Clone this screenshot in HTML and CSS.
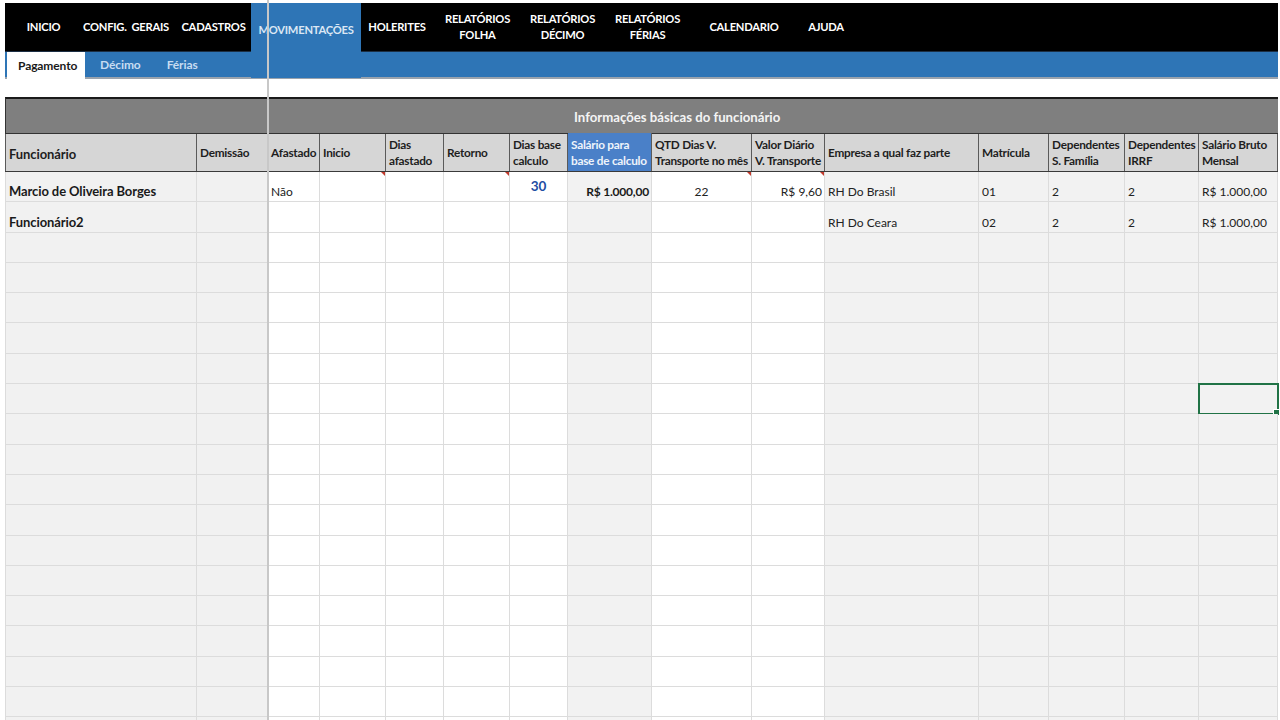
FILE: index.html
```html
<!DOCTYPE html>
<html lang="pt-BR">
<head>
<meta charset="utf-8">
<title>Movimentações - Pagamento</title>
<link rel="stylesheet" href="styles.css">
</head>
<body>
<div class="page">
  <nav class="topnav">
    <div class="nav-item w-inicio">INICIO</div>
    <div class="nav-item w-config">CONFIG.&nbsp; GERAIS</div>
    <div class="nav-item w-cad">CADASTROS</div>
    <div class="nav-item w-mov active">MOVIMENTAÇÕES</div>
    <div class="nav-item w-hol">HOLERITES</div>
    <div class="nav-item w-rf">RELATÓRIOS<br>FOLHA</div>
    <div class="nav-item w-rd">RELATÓRIOS<br>DÉCIMO</div>
    <div class="nav-item w-rfe">RELATÓRIOS<br>FÉRIAS</div>
    <div class="nav-item w-cal">CALENDARIO</div>
    <div class="nav-item w-aj">AJUDA</div>
  </nav>
  <div class="subnav">
    <div class="sub-item current">Pagamento</div>
    <div class="sub-item">Décimo</div>
    <div class="sub-item">Férias</div>
  </div>
  <div class="spacer"></div>

  <div class="sheet">
    <div class="band">Informações básicas do funcionário</div>
    <div class="head">
      <div class="hc mark big">Funcionário</div>
      <div class="hc mark">Demissão</div>
      <div class="hc">Afastado</div>
      <div class="hc mark">Inicio</div>
      <div class="hc two">Dias<br>afastado</div>
      <div class="hc mark">Retorno</div>
      <div class="hc two">Dias base<br>calculo</div>
      <div class="hc two hl">Salário para<br>base de calculo</div>
      <div class="hc two mark">QTD Dias V.<br>Transporte no mês</div>
      <div class="hc two mark">Valor Diário<br>V. Transporte</div>
      <div class="hc mark">Empresa a qual faz parte</div>
      <div class="hc mark">Matrícula</div>
      <div class="hc two mark">Dependentes<br>S. Família</div>
      <div class="hc two mark">Dependentes<br>IRRF</div>
      <div class="hc two mark">Salário Bruto<br>Mensal</div>
    </div>

    <div class="row">
      <div class="b">Marcio de Oliveira Borges</div><div></div><div>Não</div><div></div><div></div><div></div>
      <div class="days">30</div><div class="b2 r">R$ 1.000,00</div><div class="c">22</div><div class="r">R$ 9,60</div>
      <div>RH Do Brasil</div><div>01</div><div>2</div><div>2</div><div>R$ 1.000,00</div>
    </div>
    <div class="row">
      <div class="b">Funcionário2</div><div></div><div></div><div></div><div></div><div></div>
      <div></div><div></div><div></div><div></div>
      <div>RH Do Ceara</div><div>02</div><div>2</div><div>2</div><div>R$ 1.000,00</div>
    </div>
    <div class="row e"><div></div><div></div><div></div><div></div><div></div><div></div><div></div><div></div><div></div><div></div><div></div><div></div><div></div><div></div><div></div></div>
    <div class="row e"><div></div><div></div><div></div><div></div><div></div><div></div><div></div><div></div><div></div><div></div><div></div><div></div><div></div><div></div><div></div></div>
    <div class="row e"><div></div><div></div><div></div><div></div><div></div><div></div><div></div><div></div><div></div><div></div><div></div><div></div><div></div><div></div><div></div></div>
    <div class="row e"><div></div><div></div><div></div><div></div><div></div><div></div><div></div><div></div><div></div><div></div><div></div><div></div><div></div><div></div><div></div></div>
    <div class="row e"><div></div><div></div><div></div><div></div><div></div><div></div><div></div><div></div><div></div><div></div><div></div><div></div><div></div><div></div><div></div></div>
    <div class="row e"><div></div><div></div><div></div><div></div><div></div><div></div><div></div><div></div><div></div><div></div><div></div><div></div><div></div><div></div><div class="sel"></div></div>
    <div class="row e"><div></div><div></div><div></div><div></div><div></div><div></div><div></div><div></div><div></div><div></div><div></div><div></div><div></div><div></div><div></div></div>
    <div class="row e"><div></div><div></div><div></div><div></div><div></div><div></div><div></div><div></div><div></div><div></div><div></div><div></div><div></div><div></div><div></div></div>
    <div class="row e"><div></div><div></div><div></div><div></div><div></div><div></div><div></div><div></div><div></div><div></div><div></div><div></div><div></div><div></div><div></div></div>
    <div class="row e"><div></div><div></div><div></div><div></div><div></div><div></div><div></div><div></div><div></div><div></div><div></div><div></div><div></div><div></div><div></div></div>
    <div class="row e"><div></div><div></div><div></div><div></div><div></div><div></div><div></div><div></div><div></div><div></div><div></div><div></div><div></div><div></div><div></div></div>
    <div class="row e"><div></div><div></div><div></div><div></div><div></div><div></div><div></div><div></div><div></div><div></div><div></div><div></div><div></div><div></div><div></div></div>
    <div class="row e"><div></div><div></div><div></div><div></div><div></div><div></div><div></div><div></div><div></div><div></div><div></div><div></div><div></div><div></div><div></div></div>
    <div class="row e"><div></div><div></div><div></div><div></div><div></div><div></div><div></div><div></div><div></div><div></div><div></div><div></div><div></div><div></div><div></div></div>
    <div class="row e"><div></div><div></div><div></div><div></div><div></div><div></div><div></div><div></div><div></div><div></div><div></div><div></div><div></div><div></div><div></div></div>
    <div class="row e"><div></div><div></div><div></div><div></div><div></div><div></div><div></div><div></div><div></div><div></div><div></div><div></div><div></div><div></div><div></div></div>
    <div class="row e"><div></div><div></div><div></div><div></div><div></div><div></div><div></div><div></div><div></div><div></div><div></div><div></div><div></div><div></div><div></div></div>
  </div>
  <div class="freeze"></div>
</div>
</body>
</html>
```
FILE: styles.css
```css
* { box-sizing: border-box; }
html, body {
  margin: 0;
  padding: 0;
  background: #ffffff;
  height: 720px;
  overflow: hidden;
}
body {
  font-family: "Lato", "Liberation Sans", sans-serif;
  color: #1a1a1a;
}
.page {
  position: relative;
  padding: 3px 2px 0 5px;
  height: 720px;
  overflow: hidden;
}

/* top navigation */
.topnav {
  display: flex;
  background: #000;
  height: 49px;
  width: 1273px;
  border-bottom: 1px solid #1c2f44;
}
.nav-item {
  display: flex;
  align-items: center;
  justify-content: center;
  text-align: center;
  color: #ffffff;
  font-weight: 700;
  font-size: 11.2px;
  line-height: 16px;
  letter-spacing: -0.25px;
  white-space: nowrap;
}
.w-inicio { width: 77px; }
.w-config { width: 88px; }
.w-cad { width: 81px; padding-left: 6px; }
.w-mov { width: 110px; }
.w-hol { width: 72px; }
.w-rf { width: 89px; }
.w-rd { width: 81px; }
.w-rfe { width: 89px; }
.w-cal { width: 104px; }
.w-aj { width: 60px; }
.nav-item.active {
  background: #2e75b6;
  color: #dbe7f4;
  height: 75px;
  align-items: flex-start;
  padding-top: 19px;
  position: relative;
  z-index: 1;
}

.subnav {
  display: flex;
  align-items: stretch;
  background: #2e75b6;
  height: 27px;
  width: 1273px;
  border-bottom: 2px solid #9aa3ad;
}
.sub-item {
  display: flex;
  align-items: center;
  font-size: 12px;
  font-weight: 700;
  color: #c7dcf1;
  padding: 0 13px;
  letter-spacing: -0.1px;
}
.sub-item.current {
  background: #ffffff;
  color: #1a1a1a;
  margin-left: 2px;
  padding: 0 10px 0 11px;
  width: 78px;
  margin-bottom: -2px;
}
.sub-item:nth-child(2) { padding-left: 15px; }
.sub-item:nth-child(3) { padding-left: 13px; }

.spacer { height: 18px; }

/* sheet */
.sheet {
  width: 1273px;
}
.band {
  height: 37px;
  background: #7f7f7f;
  border-top: 2px solid #1a1a1a;
  border-left: 1px solid #333;
  border-bottom: 1px solid #333;
  color: #f4f4f4;
  font-weight: 700;
  font-size: 13.2px;
  display: flex;
  align-items: center;
  padding-left: 568px;
  padding-top: 2px;
}
.head, .row {
  display: grid;
  grid-template-columns: 192px 71px 52px 66px 58px 66px 58px 84px 100px 73px 154px 70px 76px 74px 79px;
}
.head {
  height: 38px;
  background: #d6d6d6;
  border-bottom: 1px solid #3a3a3a;
}
.hc {
  position: relative;
  display: flex;
  align-items: center;
  padding: 0 2px 0 3px;
  font-size: 11.8px;
  font-weight: 700;
  line-height: 16px;
  color: #1e1e1e;
  border-right: 1px solid #5a5a5a;
  white-space: nowrap;
  letter-spacing: -0.25px;
}
.hc.big { font-size: 13px; padding-top: 2px; letter-spacing: -0.1px; }
.hc:first-child { border-left: 1px solid #5a5a5a; }
.hc.two { align-items: flex-end; padding-bottom: 2px; }
.hc.hl {
  background: #4a80c8;
  color: #eef4fb;
  margin-top: -1px;
}
.hc.mark::after {
  content: "";
  position: absolute;
  right: -1px;
  top: 100%;
  border-top: 5px solid #c0392b;
  border-left: 5px solid transparent;
  margin-top: 1px;
}

.row {
  height: 30.3px;
}
.row > div {
  border-right: 1px solid #dcdcdc;
  border-bottom: 1px solid #dcdcdc;
  font-size: 12px;
  display: flex;
  align-items: flex-end;
  padding: 0 3px 2px 3px;
  white-space: nowrap;
  color: #222;
  position: relative;
}
.row > div:nth-child(1) { border-left: 1px solid #dcdcdc; }
.row > div:nth-child(1),
.row > div:nth-child(2),
.row > div:nth-child(8),
.row > div:nth-child(n+11) {
  background: #f2f2f2;
}
.row > div:nth-child(1),
.row > div:nth-child(2) { background: #f1f1f1; }
.row > .b { font-weight: 700; color: #1a1a1a; font-size: 13px; padding-bottom: 2px; letter-spacing: -0.1px; }
.row > .b2 { font-weight: 700; color: #1a1a1a; letter-spacing: -0.2px; }
.row > .r { justify-content: flex-end; padding-right: 2px; }
.row > .c { justify-content: center; }
.row > .days {
  justify-content: center;
  color: #1f4ea3;
  font-weight: 700;
  font-size: 13.5px;
  padding-bottom: 7px;
}
.row > .sel {
  outline: 2px solid #217346;
  outline-offset: -1px;
}
.row > .sel::after {
  content: "";
  position: absolute;
  right: -3px;
  bottom: -3px;
  width: 5px;
  height: 5px;
  background: #217346;
  border: 1px solid #fff;
}

.freeze {
  position: absolute;
  left: 267px;
  top: 0;
  width: 2px;
  height: 720px;
  background: #c8c8c8;
  z-index: 3;
}
```
